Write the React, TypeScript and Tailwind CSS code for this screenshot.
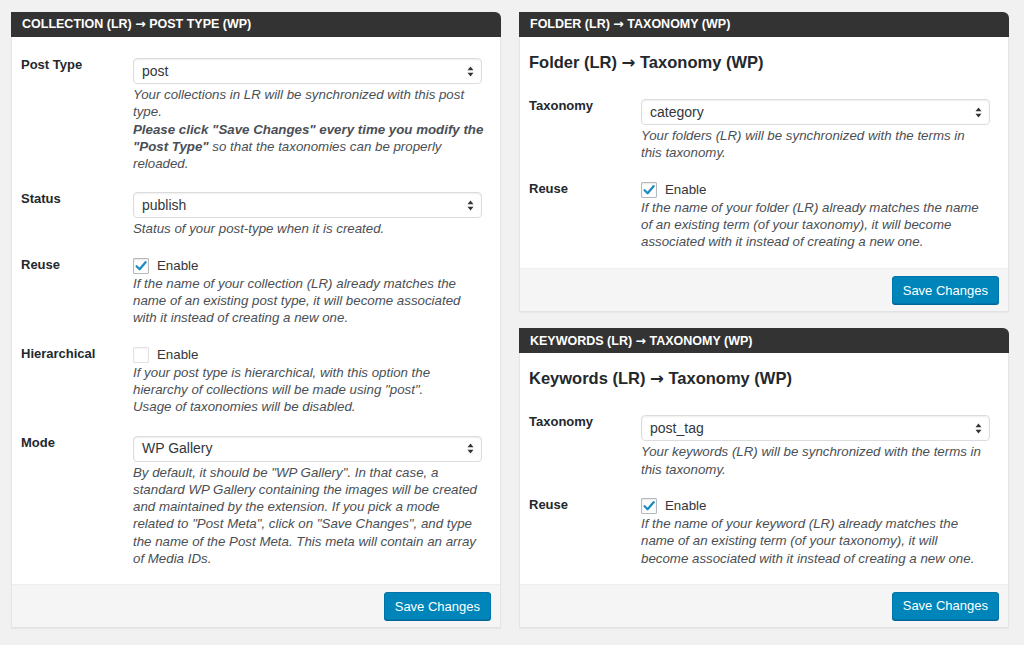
import React from "react";

function Arrow() {
  return <span className="font-['DejaVu_Sans',sans-serif] font-bold">→</span>;
}

function Title({ left, right }: { left: string; right: string }) {
  return (
    <span>
      {left} <Arrow /> {right}
    </span>
  );
}

function Select({ value }: { value: string }) {
  return (
    <div className="flex h-[26px] w-[349px] items-center justify-between rounded-[4px] border border-[#dcdcdc] bg-white pl-[8px] pr-[7px] text-[14px] text-[#32373c] shadow-[inset_0_1px_2px_rgba(0,0,0,0.07)]">
      <span>{value}</span>
      <svg width="7" height="11" viewBox="0 0 7 11" className="text-[#333]">
        <path d="M3.5 0.5 L6.5 4.3 L0.5 4.3 Z" fill="currentColor" />
        <path d="M3.5 10.5 L6.5 6.7 L0.5 6.7 Z" fill="currentColor" />
      </svg>
    </div>
  );
}

function Check({ checked }: { checked: boolean }) {
  return (
    <div className="flex h-[16px] items-center gap-[8px] text-[13.3px] text-[#32373c]">
      <div
        className={
          checked
            ? "flex h-[16px] w-[16px] items-center justify-center rounded-[1px] border border-[#b4b9be] bg-white shadow-[inset_0_1px_2px_rgba(0,0,0,0.1)]"
            : "h-[16px] w-[16px] rounded-[1px] border border-[#e2e2e2] bg-white shadow-[inset_0_1px_2px_rgba(0,0,0,0.05)]"
        }
      >
        {checked && (
          <svg width="14" height="14" viewBox="0 0 14 14">
            <path d="M2.6 7.2 L5.6 10.2 L11.6 3.2" fill="none" stroke="#1e8cbe" strokeWidth="2.3" strokeLinecap="round" strokeLinejoin="round" />
          </svg>
        )}
      </div>
      <span>Enable</span>
    </div>
  );
}

function Desc({ lines, mt }: { lines: React.ReactNode[]; mt?: boolean }) {
  return (
    <div className={(mt ? "mt-[2px] " : "mt-[1px] ") + "text-[13.3px] italic leading-[17.3px] text-[#4a4f55]"}>
      {lines.map((l, i) => (
        <div key={i} className="whitespace-nowrap">
          {l}
        </div>
      ))}
    </div>
  );
}

function Row({ label, children }: { label: string; children: React.ReactNode }) {
  return (
    <div className="flex items-start">
      <div className="w-[112px] shrink-0 text-[13px] font-bold leading-[14px] text-[#23282d]">{label}</div>
      <div className="w-[349px]">{children}</div>
    </div>
  );
}

function Panel({
  title,
  heading,
  children,
  rowGap,
  pb,
}: {
  title: React.ReactNode;
  heading?: React.ReactNode;
  children: React.ReactNode;
  rowGap: string;
  pb: string;
}) {
  return (
    <div className="flex w-[490px] flex-col overflow-hidden rounded-tr-[6px] border-b border-[#e2e2e2] shadow-[0_1px_1px_rgba(0,0,0,0.04)]">
      <div className="flex h-[25px] items-center bg-[#333333] pl-[11px] text-[12.5px] font-bold text-white">{title}</div>
      <div className="border-x border-[#e5e5e5] bg-white">
        <div className={(heading ? "pt-[15px] " : "pt-[21px] ") + pb + " pl-[9px]"}>
          {heading && (
            <div className="mb-[26px] text-[16.5px] font-bold leading-[20px] text-[#23282d]">{heading}</div>
          )}
          <div className={"flex flex-col " + rowGap}>{children}</div>
        </div>
        <div className="flex justify-end border-t border-[#eeeeee] bg-[#f5f5f5] pb-[7px] pr-[9px] pt-[7px]">
          <button className="h-[28px] rounded-[3px] border border-[#0073aa] bg-[#0085ba] px-[10px] text-[13px] text-white shadow-[0_1px_0_#006799]">
            Save Changes
          </button>
        </div>
      </div>
    </div>
  );
}

export default function App() {
  return (
    <div className="flex h-[645px] w-[1024px] items-start gap-[18px] bg-[#f1f1f1] pl-[11px] pt-[12px] font-['Liberation_Sans',Arial,sans-serif]">
      <Panel title={<Title left="COLLECTION (LR)" right="POST TYPE (WP)" />} rowGap="gap-[20px]" pb="pb-[17px]">
        <Row label="Post Type">
          <Select value="post" />
          <Desc
            mt
            lines={[
              "Your collections in LR will be synchronized with this post",
              "type.",
              <b key="a">Please click "Save Changes" every time you modify the</b>,
              <>
                <b>"Post Type"</b> so that the taxonomies can be properly
              </>,
              "reloaded.",
            ]}
          />
        </Row>
        <Row label="Status">
          <Select value="publish" />
          <Desc mt lines={["Status of your post-type when it is created."]} />
        </Row>
        <Row label="Reuse">
          <Check checked />
          <Desc
            lines={[
              "If the name of your collection (LR) already matches the",
              "name of an existing post type, it will become associated",
              "with it instead of creating a new one.",
            ]}
          />
        </Row>
        <Row label="Hierarchical">
          <Check checked={false} />
          <Desc
            lines={[
              "If your post type is hierarchical, with this option the",
              'hierarchy of collections will be made using "post".',
              "Usage of taxonomies will be disabled.",
            ]}
          />
        </Row>
        <Row label="Mode">
          <Select value="WP Gallery" />
          <Desc
            mt
            lines={[
              'By default, it should be "WP Gallery". In that case, a',
              "standard WP Gallery containing the images will be created",
              "and maintained by the extension. If you pick a mode",
              'related to "Post Meta", click on "Save Changes", and type',
              "the name of the Post Meta. This meta will contain an array",
              "of Media IDs.",
            ]}
          />
        </Row>
      </Panel>
      <div className="flex flex-col gap-[16px]">
        <Panel
          title={<Title left="FOLDER (LR)" right="TAXONOMY (WP)" />}
          heading={<Title left="Folder (LR)" right="Taxonomy (WP)" />}
          rowGap="gap-[20px]"
          pb="pb-[18px]"
        >
          <Row label="Taxonomy">
            <Select value="category" />
            <Desc mt lines={["Your folders (LR) will be synchronized with the terms in", "this taxonomy."]} />
          </Row>
          <Row label="Reuse">
            <Check checked />
            <Desc
              lines={[
                "If the name of your folder (LR) already matches the name",
                "of an existing term (of your taxonomy), it will become",
                "associated with it instead of creating a new one.",
              ]}
            />
          </Row>
        </Panel>
        <Panel
          title={<Title left="KEYWORDS (LR)" right="TAXONOMY (WP)" />}
          heading={<Title left="Keywords (LR)" right="Taxonomy (WP)" />}
          rowGap="gap-[20px]"
          pb="pb-[17px]"
        >
          <Row label="Taxonomy">
            <Select value="post_tag" />
            <Desc mt lines={["Your keywords (LR) will be synchronized with the terms in", "this taxonomy."]} />
          </Row>
          <Row label="Reuse">
            <Check checked />
            <Desc
              lines={[
                "If the name of your keyword (LR) already matches the",
                "name of an existing term (of your taxonomy), it will",
                "become associated with it instead of creating a new one.",
              ]}
            />
          </Row>
        </Panel>
      </div>
    </div>
  );
}
